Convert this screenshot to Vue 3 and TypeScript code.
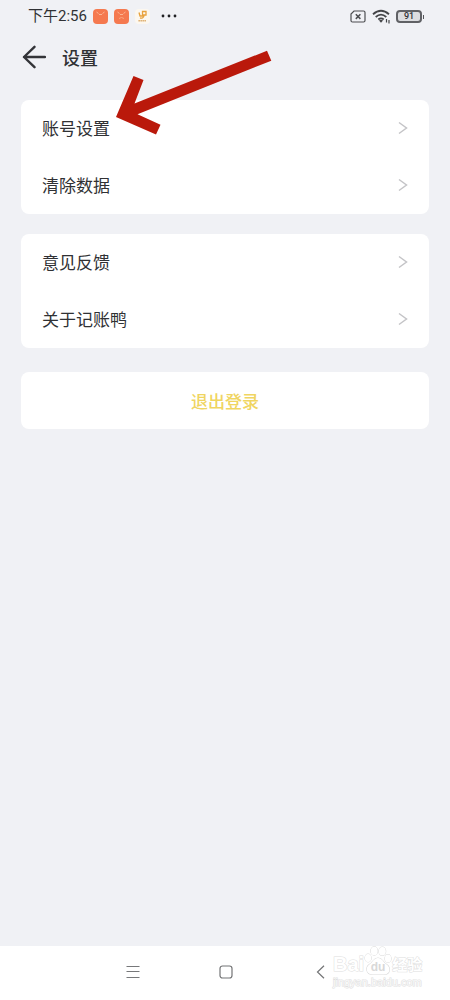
<script setup lang="ts">
interface Row {
  id: string
  label: string
}

const groups: Row[][] = [
  [
    { id: 'account', label: '账号设置' },
    { id: 'clear', label: '清除数据' },
  ],
  [
    { id: 'feedback', label: '意见反馈' },
    { id: 'about', label: '关于记账鸭' },
  ],
]
</script>

<template>
  <div class="screen">
    <div class="status">
      <span class="clock">下午2:56</span>
      <svg v-for="n in 2" :key="n" class="app-icon" width="15" height="15" viewBox="0 0 15 15" aria-hidden="true">
        <rect width="15" height="15" rx="4" fill="#f5794f" />
        <path d="M3.500 3l2 1.500M11.500 3l-2 1.500M6 5.500h3" stroke="#fbb795" stroke-width="1" fill="none" />
        <path v-if="n === 2" d="M5 9.500l2.500-1 2.500 1" stroke="#fba680" stroke-width="1" fill="none" />
      </svg>
      <svg class="app-icon" width="15" height="15" viewBox="0 0 15 15" aria-hidden="true">
        <rect width="15" height="15" rx="4" fill="#fcf7ef" />
        <path d="M4 3.500l1 3.500h3.500M7.500 2.500h3.500v3.500H7.500zM9 6.500c0 2-2 3-4 2.500" stroke="#e8a23c" stroke-width="1.300" fill="none" />
        <path d="M3.500 11.800h7.500" stroke="#d9a35a" stroke-width="1.600" stroke-dasharray="1.300 0.700" />
      </svg>
      <svg class="more" width="16" height="4" viewBox="0 0 16 4" aria-hidden="true">
        <circle cx="2" cy="2" r="1.400" /><circle cx="8" cy="2" r="1.400" /><circle cx="14" cy="2" r="1.400" />
      </svg>
      <span class="spacer"></span>
      <svg width="16" height="13" viewBox="0 0 16 13" fill="none" stroke="#4c4d50" aria-hidden="true">
        <path d="M4 1H13.500Q15 1 15 2.500V10.500Q15 12 13.500 12H2.500Q1 12 1 10.500V4Z" stroke-width="1.200" />
        <path d="M5.800 4.300l4.600 4.600M10.400 4.300L5.800 8.900" stroke-width="1.500" />
      </svg>
      <svg class="wifi" width="19" height="15" viewBox="0 0 19 15" fill="none" stroke="#444548" stroke-width="1.800" aria-hidden="true">
        <path d="M1 5.200Q9 -1.800 17 5.200M3.700 8Q9 3.300 14.300 8M6.300 10.500Q9 8.200 11.700 10.500" />
        <path d="M7 11.500Q9 10.200 11 11.500L9 13.700Z" fill="#444548" stroke="none" />
        <path d="M14.500 10v3.500M17 11v3.500" stroke-width="1.200" />
      </svg>
      <span class="battery">91</span>
    </div>

    <header class="header">
      <button class="back" type="button" aria-label="返回">
        <svg width="24" height="24" viewBox="0 0 24 24" fill="none" stroke="#333438" stroke-width="2.400" stroke-linecap="round" stroke-linejoin="round">
          <path d="M12.500 1.800L2 12L12.500 22.200M2 12H23" />
        </svg>
      </button>
      <h1>设置</h1>
    </header>

    <main class="content">
      <section v-for="(group, i) in groups" :key="i" class="card">
        <button v-for="row in group" :key="row.id" class="row" type="button">
          <span>{{ row.label }}</span>
          <svg width="10" height="14" viewBox="0 0 10 14" fill="none" stroke="#c4c4c7" stroke-width="1.500" aria-hidden="true">
            <path d="M1 1.500L8.500 7L1 12.500" />
          </svg>
        </button>
      </section>
      <button class="logout" type="button">退出登录</button>
    </main>

    <nav class="nav">
      <button type="button" aria-label="菜单">
        <svg width="14" height="14" viewBox="0 0 14 14" fill="none" stroke="#77787a" stroke-width="1.100">
          <path d="M0.500 1.500h13M0.500 6.500h13M0.500 12.500h13" />
        </svg>
      </button>
      <button type="button" aria-label="主页">
        <svg width="14" height="14" viewBox="0 0 14 14" fill="none" stroke="#737476" stroke-width="1.200">
          <rect x="1" y="1" width="12" height="12" rx="2.500" />
        </svg>
      </button>
      <button type="button" aria-label="后退">
        <svg width="14" height="14" viewBox="0 0 14 14" fill="none" stroke="#737476" stroke-width="1.200">
          <path d="M12 0.800L5.500 7L12 13.200" />
        </svg>
      </button>
    </nav>

    <svg class="pointer" width="156" height="86" viewBox="0 0 156 86" aria-hidden="true">
      <path d="M0 67L17.500 26L27.500 30L18.500 53.500L151 0.700L155.300 10.700L21.500 64.200L44.500 74.700L40 84.500Z" fill="#ba190b" />
    </svg>

    <div class="watermark">
      <div class="brand">
        <span class="latin">Bai</span>
        <span class="paw">
          <svg width="28" height="30" viewBox="0 0 26 30" preserveAspectRatio="none" fill="#fff" stroke="#dadada" stroke-width="1" aria-hidden="true">
            <ellipse cx="3.800" cy="12" rx="2.900" ry="4" />
            <ellipse cx="9.500" cy="5" rx="3.200" ry="4.300" />
            <ellipse cx="17" cy="5.300" rx="3.200" ry="4.300" />
            <ellipse cx="22.300" cy="12.500" rx="2.900" ry="4" />
            <path d="M13 12C9 12 8.500 16 5 18.500C1 21.500 2 28.500 8 28.500H18.500C24.500 28.500 25 21.500 21 18.500C17.500 16 17 12 13 12Z" />
          </svg>
          <span class="du">du</span>
        </span>
        <span class="cjk">经验</span>
      </div>
      <div class="site">jingyan.baidu.com</div>
    </div>
  </div>
</template>

<style>
body {
  margin: 0;
}
</style>

<style scoped>
.screen {
  position: relative;
  display: flex;
  flex-direction: column;
  min-height: 100vh;
  background: #f0f1f5;
  color: #303134;
  font-family: "Noto Sans CJK SC", "Noto Sans", sans-serif;
}

button {
  border: 0;
  padding: 0;
  background: none;
  color: inherit;
  font: inherit;
  cursor: pointer;
}

svg {
  display: block;
  flex: none;
}

.status {
  display: flex;
  align-items: center;
  height: 32px;
  padding: 0 25px 0 28px;
}

.clock {
  margin-right: 6px;
  font-family: Roboto, "Noto Sans CJK SC", sans-serif;
  font-size: 15px;
  line-height: 20px;
}

.app-icon {
  margin-right: 6px;
}

.more {
  margin-left: 5px;
  fill: #202124;
}

.spacer {
  flex: 1;
}

.wifi {
  margin: 0 5px 0 6px;
}

.battery {
  position: relative;
  box-sizing: border-box;
  width: 26px;
  height: 13px;
  margin-right: 3px;
  border: 2px solid #606165;
  border-radius: 4px;
  background: #dcdde0;
  font: 500 9px/9px Roboto, sans-serif;
  text-align: center;
}

.battery::after {
  content: "";
  position: absolute;
  top: 3px;
  right: -4px;
  width: 1px;
  height: 4px;
  background: #55565a;
}

.header {
  display: flex;
  align-items: center;
  gap: 16px;
  height: 49px;
  padding: 0 22px;
}

h1 {
  margin: 0;
  font-size: 18px;
  line-height: 26px;
  font-weight: 500;
}

.content {
  flex: 1;
  padding: 19px 21px;
}

.card {
  margin-bottom: 20px;
  border-radius: 8px;
  background: #fff;
}

.row {
  display: flex;
  align-items: center;
  justify-content: space-between;
  width: 100%;
  height: 57px;
  padding: 0 21px 1px;
  font-size: 17px;
  line-height: 24px;
}

.logout {
  display: block;
  width: 100%;
  height: 57px;
  margin-top: 24px;
  padding-bottom: 1px;
  border-radius: 8px;
  background: #fff;
  color: #f0d561;
  font-size: 17px;
  font-weight: 500;
}

.nav {
  display: grid;
  grid-template-columns: repeat(3, 1fr);
  height: 54px;
  padding: 0 84px 3px 86px;
  box-sizing: border-box;
  background: #fff;
}

.nav button {
  display: grid;
  place-items: center;
}

.pointer {
  position: absolute;
  top: 50px;
  left: 116px;
  pointer-events: none;
}

.watermark {
  position: absolute;
  right: 25px;
  bottom: 12px;
  width: 92px;
  color: #fff;
  font-family: "Liberation Sans", "Noto Sans CJK SC", sans-serif;
  pointer-events: none;
  -webkit-text-stroke: 1px #dedede;
  paint-order: stroke fill;
}

.brand {
  display: flex;
  align-items: flex-end;
  height: 30px;
}

.latin {
  font-size: 20px;
  line-height: 24px;
  font-weight: bold;
}

.paw {
  position: relative;
}

.du {
  position: absolute;
  left: 0;
  right: 0;
  bottom: 3px;
  color: #d8d8d8;
  font-size: 12px;
  line-height: 12px;
  font-weight: bold;
  text-align: center;
  -webkit-text-stroke: 0;
}

.cjk {
  font-family: "Noto Sans CJK SC", sans-serif;
  font-size: 15px;
  line-height: 24px;
  font-weight: bold;
  white-space: nowrap;
}

.site {
  color: #fafafa;
  font-size: 11px;
  line-height: 12px;
  white-space: nowrap;
}
</style>
